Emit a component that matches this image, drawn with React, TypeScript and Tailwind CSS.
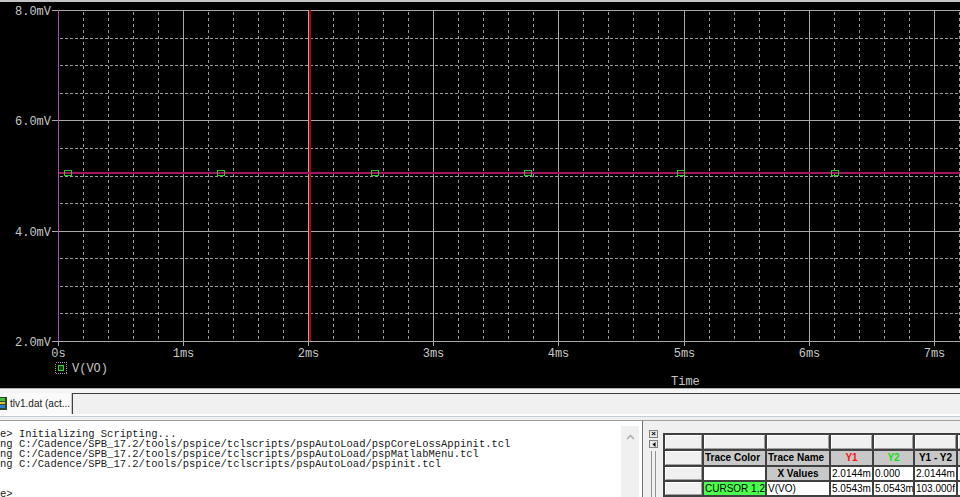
import React from "react";

const X0 = 58;
const XS = 125.1;
const Y0 = 10;
const YB = 341;
const YS = (YB - Y0) / 3;

function Plot() {
  const verts: React.ReactNode[] = [];
  for (let i = 1; i <= 40; i++) {
    const x = Math.round(X0 + (i * XS) / 5) + 0.5;
    if (x > 960) break;
    if (i % 5 === 0) {
      verts.push(<line key={"v" + i} x1={x} x2={x} y1={Y0} y2={YB} stroke="#a8a8a8" strokeWidth={1} />);
    } else {
      verts.push(
        <line key={"v" + i} x1={x} x2={x} y1={Y0 + 2} y2={YB} stroke="#9c9c9c" strokeWidth={1} strokeDasharray="3 3" />
      );
    }
  }
  const hors: React.ReactNode[] = [];
  for (let j = 1; j < 12; j++) {
    const y = Math.round(Y0 + (j * YS) / 4) + 0.5;
    if (j % 4 === 0) {
      hors.push(<line key={"h" + j} x1={X0} x2={960} y1={y} y2={y} stroke="#a8a8a8" strokeWidth={1} />);
    } else {
      hors.push(
        <line key={"h" + j} x1={X0 + 2} x2={960} y1={y} y2={y} stroke="#9c9c9c" strokeWidth={1} strokeDasharray="3 2" />
      );
    }
  }
  const yLabels = ["8.0mV", "6.0mV", "4.0mV", "2.0mV"];
  const xLabels = ["0s", "1ms", "2ms", "3ms", "4ms", "5ms", "6ms", "7ms"];
  const markers = [67, 220.5, 374, 527, 680.5, 834];
  const mono = "'Liberation Mono', 'DejaVu Sans Mono', monospace";
  return (
    <svg width={960} height={386} viewBox="0 2 960 386" className="block" shapeRendering="crispEdges">
      <rect x={0} y={2} width={960} height={386} fill="#000" />
      {verts}
      {hors}
      <line x1={X0} x2={960} y1={Y0 + 0.5} y2={Y0 + 0.5} stroke="#a8a8a8" />
      <line x1={X0} x2={960} y1={YB + 0.5} y2={YB + 0.5} stroke="#a8a8a8" />
      <line x1={X0 + 0.5} x2={X0 + 0.5} y1={Y0} y2={YB + 1} stroke="#a050a8" />
      {yLabels.map((t, k) => {
        const y = Math.round(Y0 + k * YS) + 0.5;
        return (
          <g key={t}>
            <line x1={52} x2={X0} y1={y} y2={y} stroke="#a8a8a8" />
            <text x={51} y={y + 4} textAnchor="end" fill="#c8c8c8" fontSize={12} fontFamily={mono}>
              {t}
            </text>
          </g>
        );
      })}
      {xLabels.map((t, k) => {
        const x = Math.round(X0 + k * XS) + 0.5;
        return (
          <g key={t}>
            <line x1={x} x2={x} y1={YB} y2={YB + 5} stroke="#a8a8a8" />
            <text x={x} y={357} textAnchor="middle" fill="#c8c8c8" fontSize={12} fontFamily={mono}>
              {t}
            </text>
          </g>
        );
      })}
      <rect x={309} y={Y0} width={2} height={YB - Y0} fill="#b00000" />
      <rect x={X0 + 1} y={172} width={902} height={2} fill="#a01860" />
      {markers.map((m) => (
        <rect key={m} x={Math.round(m - 3.5) + 0.5} y={170.5} width={7} height={5} fill="none" stroke="#30c030" />
      ))}
      <rect x={55.5} y={362.5} width={11} height={11} fill="none" stroke="#a0a0a0" strokeDasharray="1 1" />
      <rect x={58.5} y={365.5} width={5} height={5} fill="#104010" stroke="#30d030" />
      <text x={72} y={372} fill="#c8c8c8" fontSize={12} fontFamily={mono}>
        V(VO)
      </text>
      <text x={671} y={385} fill="#c8c8c8" fontSize={12} fontFamily={mono}>
        Time
      </text>
    </svg>
  );
}

function Cell({
  children,
  kind = "white",
  align = "left",
  bold = false,
  color,
}: {
  children?: React.ReactNode;
  kind?: "gray" | "head" | "white" | "green";
  align?: "left" | "center";
  bold?: boolean;
  color?: string;
}) {
  const bg =
    kind === "gray"
      ? "bg-[#f0f0f0] border-t border-l border-white border-b border-r border-b-[#a0a0a0] border-r-[#a0a0a0]"
      : kind === "head"
      ? "bg-[#c8c8c8]"
      : kind === "green"
      ? "bg-[#4cff4c]"
      : "bg-white";
  return (
    <div
      className={
        "flex items-center overflow-hidden whitespace-nowrap text-[10px] leading-none " +
        bg +
        (align === "center" ? " justify-center" : " justify-start pl-[1px]") +
        (bold ? " font-bold" : "")
      }
      style={color ? { color } : undefined}
    >
      {children}
    </div>
  );
}

function CursorTable() {
  return (
    <div className="grid grid-cols-[37px_61px_62px_41px_39px_41px_20px] grid-rows-[14px_14px_13px_13px_14px] gap-[2px] bg-[#404040] p-[2px] text-black w-max">
      <Cell kind="gray" />
      <Cell kind="gray" />
      <Cell kind="gray" />
      <Cell kind="gray" />
      <Cell kind="gray" />
      <Cell kind="gray" />
      <Cell kind="gray" />

      <Cell kind="gray" />
      <Cell kind="head" bold>
        Trace Color
      </Cell>
      <Cell kind="head" bold>
        Trace Name
      </Cell>
      <Cell kind="head" bold align="center" color="#ff1010">
        Y1
      </Cell>
      <Cell kind="head" bold align="center" color="#10e010">
        Y2
      </Cell>
      <Cell kind="head" bold align="center">
        Y1 - Y2
      </Cell>
      <Cell kind="head" />

      <Cell kind="gray" />
      <Cell kind="white" />
      <Cell kind="head" bold align="center">
        X Values
      </Cell>
      <Cell>2.0144m</Cell>
      <Cell>0.000</Cell>
      <Cell>2.0144m</Cell>
      <Cell />

      <Cell kind="gray" />
      <Cell kind="green">CURSOR 1,2</Cell>
      <Cell>V(VO)</Cell>
      <Cell>5.0543m</Cell>
      <Cell>5.0543m</Cell>
      <Cell>103.000f</Cell>
      <Cell />

      <Cell kind="gray" />
      <Cell />
      <Cell />
      <Cell />
      <Cell />
      <Cell />
      <Cell />
    </div>
  );
}

export default function App() {
  const lines = [
    "e> Initializing Scripting...",
    "ng C:/Cadence/SPB_17.2/tools/pspice/tclscripts/pspAutoLoad/pspCoreLossAppinit.tcl",
    "ng C:/Cadence/SPB_17.2/tools/pspice/tclscripts/pspAutoLoad/pspMatlabMenu.tcl",
    "ng C:/Cadence/SPB_17.2/tools/pspice/tclscripts/pspAutoLoad/pspinit.tcl",
    "",
    "",
    "e>",
  ];
  return (
    <div className="w-[960px] h-[497px] overflow-hidden bg-[#f0f0f0] flex flex-col font-['Liberation_Sans',Arial,sans-serif]">
      <div className="h-[2px] bg-[#c4c4c4] shrink-0" />
      <div className="h-[386px] shrink-0 bg-black">
        <Plot />
      </div>
      <div className="h-[1px] bg-[#b0b0b0] shrink-0" />
      {/* tab bar */}
      <div className="h-[31px] shrink-0 flex flex-col bg-[#f0f0f0]">
        <div className="h-[4px] bg-[#f4f4f4]" />
        <div className="flex h-[21px]">
          <div className="w-[72px] h-full bg-[#fafafa] border-r border-[#c8c8c8] flex items-center gap-[3px] text-[10px] text-[#202020] overflow-hidden">
            <svg width={7} height={13} viewBox="0 0 7 13" className="shrink-0">
              <rect x={0} y={0} width={7} height={13} fill="#2a4a2a" />
              <rect x={0} y={1} width={5} height={3} fill="#40c040" />
              <rect x={0} y={5} width={5} height={2} fill="#e0c030" />
              <rect x={0} y={8} width={5} height={3} fill="#3080d0" />
            </svg>
            <span className="whitespace-nowrap">tlv1.dat (act...</span>
          </div>
          <div className="flex-1 border-t border-l border-[#404040] bg-[#f0f0f0]" />
        </div>
        <div className="h-[2px] bg-[#ffffff]" />
        <div className="h-[1px] bg-[#c4ccd8]" />
        <div className="h-[3px] bg-[#f0f0f0]" />
      </div>
      {/* bottom panel */}
      <div className="flex-1 flex min-h-0">
        <div className="w-[643px] shrink-0 bg-white border-t border-[#a0a0a0] border-r border-r-[#707070] flex">
          <div className="flex-1 overflow-hidden pt-[8px]">
            {lines.map((l, i) => (
              <div
                key={i}
                className="h-[10px] leading-[10px] whitespace-pre text-[10.5px] text-[#1a1a1a] font-['Liberation_Mono','DejaVu_Sans_Mono',monospace]"
              >
                {l}
              </div>
            ))}
          </div>
          <div className="w-[18px] mt-[5px] mr-[3px] bg-[#f0f0f0] flex justify-center pt-[8px]">
            <svg width={9} height={6} viewBox="0 0 9 6">
              <path d="M1 5 L4.5 1.5 L8 5" fill="none" stroke="#a8a8a8" strokeWidth={1.3} />
            </svg>
          </div>
        </div>
        <div className="w-[20px] shrink-0 bg-[#f0f0f0] border-t border-[#a0a0a0] flex flex-col items-center pt-[9px] pl-[1px]">
          <div className="w-[9px] h-[8px] bg-[#e8e8e8] border border-[#808080] flex items-center justify-center text-[8px] leading-none font-bold text-black">
            ×
          </div>
          <div className="mt-[2px] w-[9px] h-[8px] bg-[#e8e8e8] border border-[#808080] flex items-center justify-center">
            <svg width={4} height={5} viewBox="0 0 4 5">
              <path d="M3.5 0 L0.5 2.5 L3.5 5 Z" fill="#000" />
            </svg>
          </div>
          <div className="mt-[3px] flex-1 w-[5px] border-l border-r border-[#909090]" />
        </div>
        <div className="flex-1 border-t border-[#a0a0a0] pt-[12px] overflow-hidden">
          <CursorTable />
        </div>
      </div>
    </div>
  );
}
